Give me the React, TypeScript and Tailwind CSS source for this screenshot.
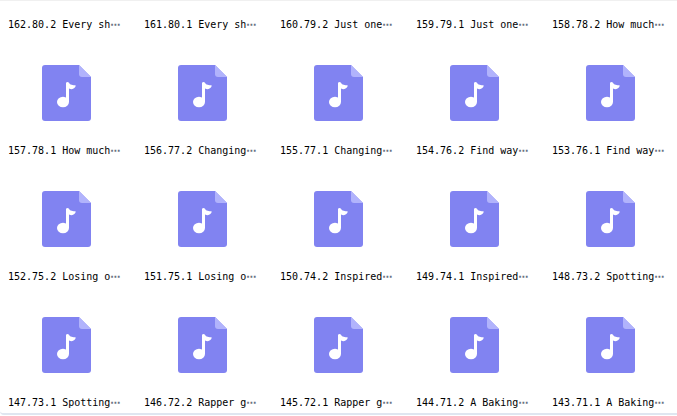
const clipped = ['162.80.2 Every sh', '161.80.1 Every sh', '160.79.2 Just one', '159.79.1 Just one', '158.78.2 How much']
const files = [
  '157.78.1 How much', '156.77.2 Changing', '155.77.1 Changing', '154.76.2 Find way', '153.76.1 Find way',
  '152.75.2 Losing o', '151.75.1 Losing o', '150.74.2 Inspired', '149.74.1 Inspired', '148.73.2 Spotting',
  '147.73.1 Spotting', '146.72.2 Rapper g', '145.72.1 Rapper g', '144.71.2 A Baking', '143.71.1 A Baking',
]

function MusicFile() {
  return (
    <svg className="mb-[22px] h-14 w-[49px]" viewBox="0 0 49 56" aria-hidden="true">
      <path d="M3 0H37L49 12V53a3 3 0 0 1-3 3H3a3 3 0 0 1-3-3V3a3 3 0 0 1 3-3Z" fill="#8183f1" />
      <path d="M37 0 49 12H40a3 3 0 0 1-3-3Z" fill="#b1b3fc" />
      <ellipse cx="21" cy="37" rx="6" ry="5.2" fill="#fff" />
      <path d="M24 17.8Q25.5 16 27 17.8C28 20.3 31 20 33.8 20.6C33.2 23.5 30.5 25 27 23.6V37H24Z" fill="#fff" />
    </svg>
  )
}

function Item({ name, icon = true }: { name: string; icon?: boolean }) {
  return (
    <li className="pl-2">
      <div className="flex w-[117px] flex-col items-center">
        {icon && <MusicFile />}
        <p className="flex h-4 w-full items-center whitespace-pre font-['DejaVu_Sans_Mono',monospace] text-[10px] leading-4 text-black">
          {name}<span className="font-['DejaVu_Sans',sans-serif] font-bold text-gray-500">⋯</span>
        </p>
      </div>
    </li>
  )
}

export default function App() {
  return (
    <main className="overflow-hidden bg-white">
      <div className="rounded-bl border-t border-b-2 border-t-[#f0f0f0] border-b-[#dfe6f0]">
        <ul className="-mr-[3px] grid grid-cols-5 gap-y-8 pt-4 pb-[2px]">
          {clipped.map(n => <Item key={n} name={n} icon={false} />)}
          {files.map(n => <Item key={n} name={n} />)}
        </ul>
      </div>
    </main>
  )
}
